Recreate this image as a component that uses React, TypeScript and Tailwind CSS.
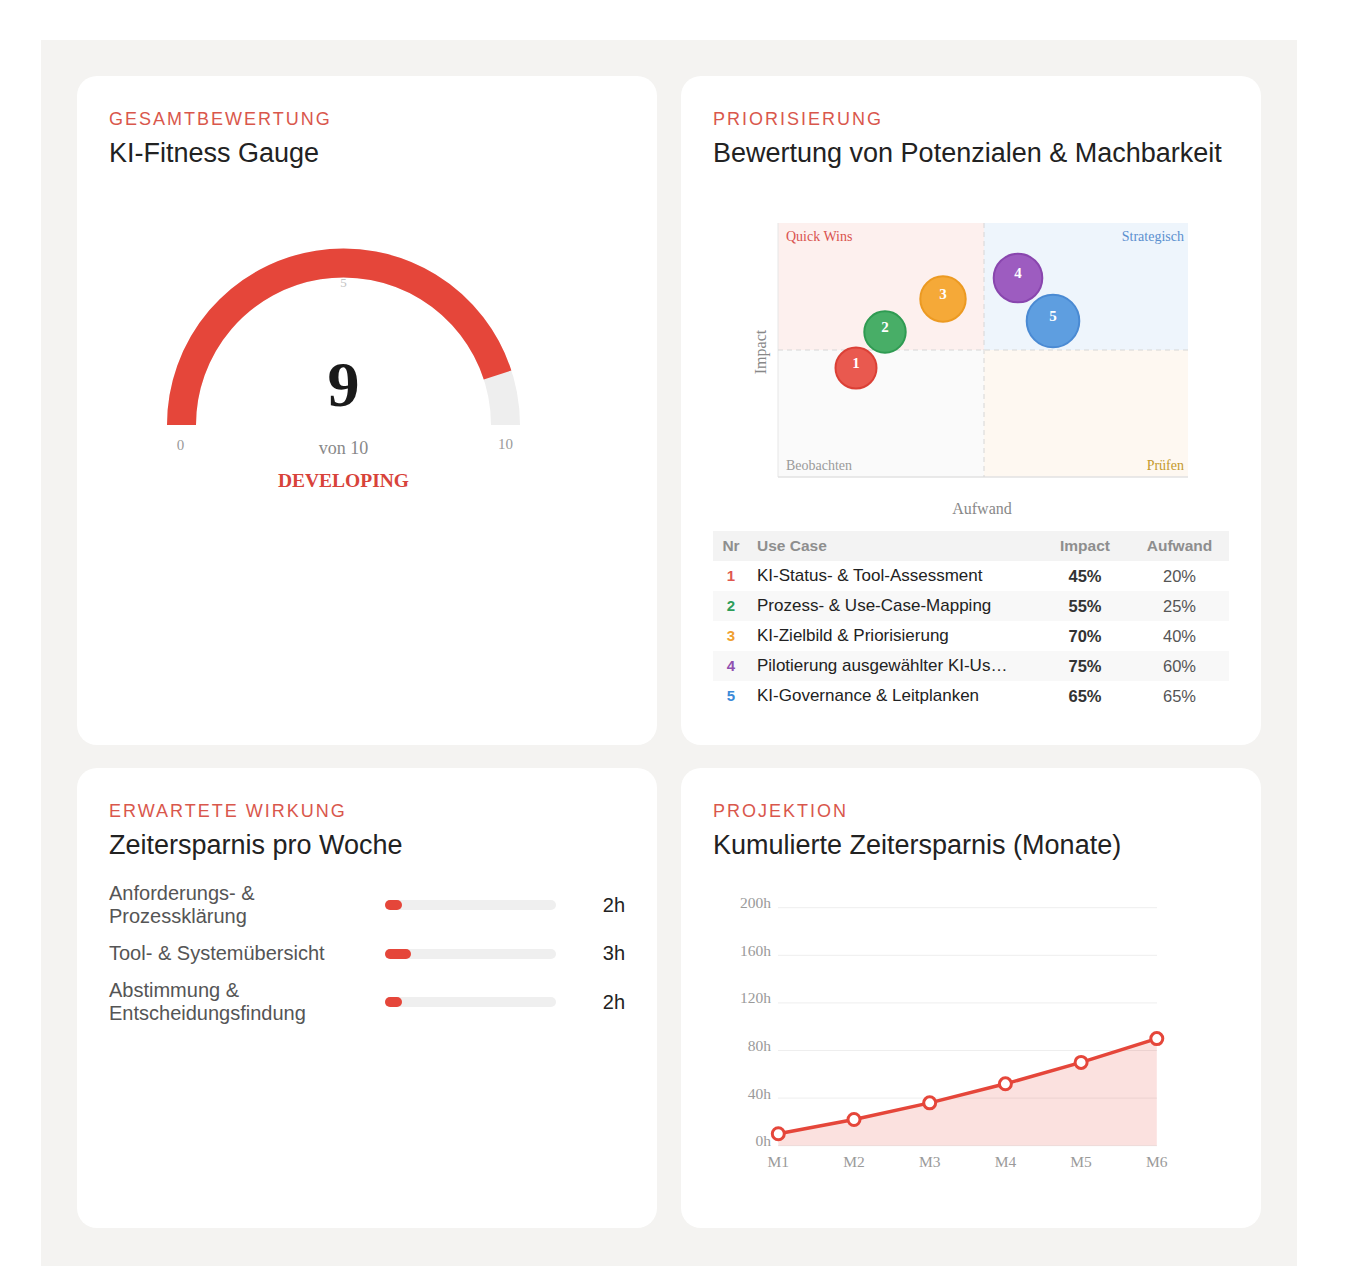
import React from "react";

const SERIF = '"Liberation Serif", "Times New Roman", serif';
const RED = "#e5463a";

function Card({
  eyebrow,
  title,
  children,
}: {
  eyebrow: string;
  title: string;
  children: React.ReactNode;
}) {
  return (
    <section className="overflow-hidden rounded-[20px] bg-white px-8 pt-8">
      <div className="text-[18px] leading-[22px] tracking-[2px] text-[#d9574c]">
        {eyebrow}
      </div>
      <h2 className="mt-[7px] text-[27px] leading-[32px] text-[#222]">
        {title}
      </h2>
      {children}
    </section>
  );
}

function Gauge() {
  const cx = 234.5;
  const cy = 225;
  const r = 162;
  const value = 9;
  const angle = Math.PI - (value / 10) * Math.PI;
  const ex = cx + r * Math.cos(angle);
  const ey = cy - r * Math.sin(angle);

  return (
    <svg width="516" height="300" className="mt-[31px] block">
      <path
        d={`M${cx - r} ${cy} A${r} ${r} 0 0 1 ${cx + r} ${cy}`}
        fill="none"
        stroke="#eeeeee"
        strokeWidth="29"
      />
      <path
        d={`M${cx - r} ${cy} A${r} ${r} 0 0 1 ${ex} ${ey}`}
        fill="none"
        stroke={RED}
        strokeWidth="29"
      />
      <g fontFamily={SERIF} textAnchor="middle">
        <text x={cx} y="87" fontSize="13" fill="#c2c2c2">
          5
        </text>
        <text x="71.5" y="250" fontSize="15" fill="#9a9a9a">
          0
        </text>
        <text x="396.5" y="249" fontSize="15" fill="#9a9a9a">
          10
        </text>
        <text x={cx} y="206" fontSize="64" fontWeight="bold" fill="#1a1a1a">
          {value}
        </text>
        <text x={cx} y="254" fontSize="18" fill="#888">
          von 10
        </text>
        <text x={cx} y="287" fontSize="19.5" fontWeight="bold" fill="#d8433a">
          DEVELOPING
        </text>
      </g>
    </svg>
  );
}

const bubbles = [
  { n: 1, x: 143, y: 168, r: 20.5, fill: "#e9594f", stroke: "#db4036" },
  { n: 2, x: 172, y: 132, r: 20.7, fill: "#48ae67", stroke: "#2f9b52" },
  { n: 3, x: 230, y: 99, r: 22.7, fill: "#f5a938", stroke: "#ec9a22" },
  { n: 4, x: 305, y: 78, r: 24.3, fill: "#9d5cc0", stroke: "#8946ae" },
  { n: 5, x: 340, y: 121, r: 26.3, fill: "#5e9ee0", stroke: "#4a8ad3" },
];

function Matrix() {
  return (
    <svg width="516" height="320" className="mt-[31px] block">
      <rect x="65" y="23" width="206" height="127" fill="#fdf0ee" />
      <rect x="271" y="23" width="204" height="127" fill="#eef5fc" />
      <rect x="65" y="150" width="206" height="127" fill="#fafafa" />
      <rect x="271" y="150" width="204" height="127" fill="#fef8f1" />
      <line x1="65" y1="23" x2="65" y2="277" stroke="#e6e6e6" />
      <line x1="65" y1="277" x2="475" y2="277" stroke="#e2e2e2" strokeWidth="1.5" />
      <line x1="271" y1="23" x2="271" y2="277" stroke="#d6d6d6" strokeDasharray="5 4" />
      <line x1="65" y1="150" x2="475" y2="150" stroke="#d6d6d6" strokeDasharray="5 4" />
      <g fontFamily={SERIF} fontSize="14">
        <text x="73" y="41" fill="#d9534f">
          Quick Wins
        </text>
        <text x="471" y="41" fill="#5a8fcf" textAnchor="end">
          Strategisch
        </text>
        <text x="73" y="270" fill="#9a9a9a">
          Beobachten
        </text>
        <text x="471" y="270" fill="#c49a2c" textAnchor="end">
          Prüfen
        </text>
      </g>
      <g fontFamily={SERIF} fontSize="16" fill="#888" textAnchor="middle">
        <text x="53" y="152" transform="rotate(-90 53 152)">
          Impact
        </text>
        <text x="269" y="314">
          Aufwand
        </text>
      </g>
      {bubbles.map((b) => (
        <g key={b.n}>
          <circle cx={b.x} cy={b.y} r={b.r} fill={b.fill} stroke={b.stroke} strokeWidth="2" />
          <text
            x={b.x}
            y={b.y}
            textAnchor="middle"
            fontFamily={SERIF}
            fontSize="15"
            fontWeight="bold"
            fill="#ffffff"
          >
            {b.n}
          </text>
        </g>
      ))}
    </svg>
  );
}

const useCases = [
  { n: 1, name: "KI-Status- & Tool-Assessment", impact: 45, effort: 20, color: "text-[#e0574f]" },
  { n: 2, name: "Prozess- & Use-Case-Mapping", impact: 55, effort: 25, color: "text-[#2e9e5a]" },
  { n: 3, name: "KI-Zielbild & Priorisierung", impact: 70, effort: 40, color: "text-[#f0a030]" },
  { n: 4, name: "Pilotierung ausgewählter KI-Use-Cases", impact: 75, effort: 60, color: "text-[#9050b0]" },
  { n: 5, name: "KI-Governance & Leitplanken", impact: 65, effort: 65, color: "text-[#3b8ad8]" },
];

function UseCaseTable() {
  return (
    <div className="mt-[11px]">
      <div className="grid h-[30px] grid-cols-[44px_283px_90px_99px] items-center bg-[#f3f3f3] text-[15.5px] font-bold text-[#8e8e8e]">
        <div className="pr-2 text-center">Nr</div>
        <div>Use Case</div>
        <div className="text-center">Impact</div>
        <div className="text-center">Aufwand</div>
      </div>
      {useCases.map((u) => (
        <div
          key={u.n}
          className={`grid h-[30px] grid-cols-[44px_283px_90px_99px] items-center ${
            u.n % 2 === 0 ? "bg-[#f8f8f8]" : "bg-white"
          }`}
        >
          <div className={`pr-2 text-center text-[15px] font-bold ${u.color}`}>{u.n}</div>
          <div className="truncate pr-[28px] text-[17px] text-[#222]">{u.name}</div>
          <div className="text-center text-[16.5px] font-bold text-[#333]">{u.impact}%</div>
          <div className="text-center text-[16.5px] text-[#555]">{u.effort}%</div>
        </div>
      ))}
    </div>
  );
}

const savings = [
  { label: "Anforderungs- & Prozessklärung", hours: 2 },
  { label: "Tool- & Systemübersicht", hours: 3 },
  { label: "Abstimmung & Entscheidungsfindung", hours: 2 },
];

function SavingsList() {
  return (
    <div className="mt-[21px] flex flex-col gap-[14px]">
      {savings.map((s) => (
        <div key={s.label} className="grid grid-cols-[268px_171px_61px] items-center gap-x-[8px]">
          <div className="text-[20px] leading-[23px] text-[#555]">{s.label}</div>
          <div className="h-[10px] rounded-full bg-[#efefef]">
            <div
              className="h-full rounded-full bg-[#e5463a]"
              style={{ width: `${(s.hours / 20) * 100}%` }}
            />
          </div>
          <div className="text-right text-[20px] leading-[23px] text-[#222]">{s.hours}h</div>
        </div>
      ))}
    </div>
  );
}

const months = [10, 22, 36, 52, 70, 90];

function LineChart() {
  const base = 265.7;
  const y = (v: number) => base - v * 1.19;
  const x = (i: number) => 65.3 + i * 75.7;
  const pts = months.map((v, i) => `${x(i)} ${y(v)}`);
  const line = `M${pts.join(" L")}`;
  const area = `${line} L${x(5)} ${base} L${x(0)} ${base} Z`;

  return (
    <svg width="516" height="300" className="mt-[19px] block">
      {[0, 40, 80, 120, 160, 200].map((v) => (
        <g key={v}>
          <line x1="65" y1={y(v)} x2="444" y2={y(v)} stroke="#eeeeee" />
          <text
            x="58"
            y={y(v) + 0.5}
            textAnchor="end"
            fontFamily={SERIF}
            fontSize="15.5"
            fill="#9a9a9a"
          >
            {v}h
          </text>
        </g>
      ))}
      <path d={area} fill="#e5463a" fillOpacity="0.16" />
      <path d={line} fill="none" stroke={RED} strokeWidth="3.5" strokeLinejoin="round" />
      {months.map((v, i) => (
        <circle key={i} cx={x(i)} cy={y(v)} r="6" fill="#fff" stroke={RED} strokeWidth="3" />
      ))}
      {months.map((_, i) => (
        <text
          key={i}
          x={x(i)}
          y="287"
          textAnchor="middle"
          fontFamily={SERIF}
          fontSize="15.5"
          fill="#9a9a9a"
        >
          M{i + 1}
        </text>
      ))}
    </svg>
  );
}

export default function App() {
  return (
    <div
      className="min-h-screen bg-white pl-[41px] pt-[40px]"
      style={{ fontFamily: '"Liberation Sans", Arial, Helvetica, sans-serif' }}
    >
      <div className="w-[1256px] bg-[#f4f3f1] px-9 pb-[38px] pt-9">
        <div className="grid grid-cols-2 grid-rows-[669px_460px] gap-x-6 gap-y-[23px]">
          <Card eyebrow="GESAMTBEWERTUNG" title="KI-Fitness Gauge">
            <Gauge />
          </Card>
          <Card eyebrow="PRIORISIERUNG" title="Bewertung von Potenzialen & Machbarkeit">
            <Matrix />
            <UseCaseTable />
          </Card>
          <Card eyebrow="ERWARTETE WIRKUNG" title="Zeitersparnis pro Woche">
            <SavingsList />
          </Card>
          <Card eyebrow="PROJEKTION" title="Kumulierte Zeitersparnis (Monate)">
            <LineChart />
          </Card>
        </div>
      </div>
    </div>
  );
}
